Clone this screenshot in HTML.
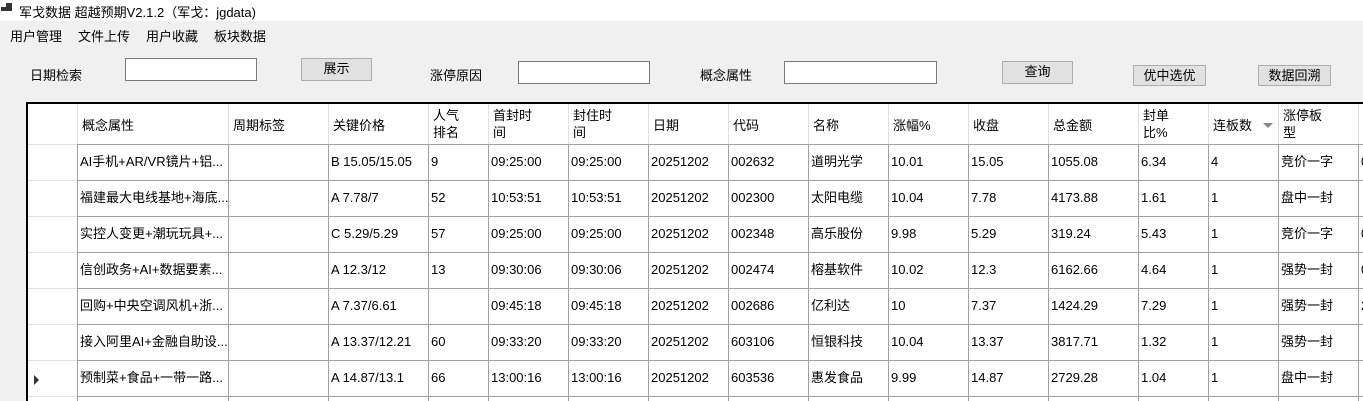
<!DOCTYPE html>
<html><head><meta charset="utf-8"><style>
*{margin:0;padding:0;box-sizing:border-box}
html,body{width:1363px;height:401px;overflow:hidden}
body{background:#f0f0f0;font-family:"Liberation Sans","Noto Sans CJK SC",sans-serif;font-size:13px;color:#000;position:relative}
.a{position:absolute;white-space:nowrap}
.tb{left:0;top:0;width:1363px;height:21px;background:#fff}
.btn{position:absolute;background:#e1e1e1;border:1px solid #adadad;text-align:center;font-size:13px;line-height:20px}
.inp{position:absolute;background:#fff;border:1px solid #7a7a7a;height:23px}
#grid{position:absolute;left:26px;top:102px;width:1337px;height:299px;background:#fff;border-top:2px solid #000;border-left:2px solid #000;overflow:hidden}
.vl{position:absolute;top:0;width:1px;height:300px;background:#a0a0a0}
.hl{position:absolute;left:0;height:1px;width:1340px;background:#a0a0a0}
.hd{position:absolute;top:0;font-size:13px;line-height:17px}
.c{position:absolute;font-size:13px;line-height:16px}
</style></head><body>
<div class="a tb"></div>
<div class="a" style="left:1px;top:7px;width:5px;height:4px;background:#333"></div>
<div class="a" style="left:6px;top:3px;width:6px;height:8px;background:#333"></div>
<div class="a" style="left:19px;top:2px;font-size:13px">军戈数据 超越预期V2.1.2（军戈：jgdata)</div>
<div class="a" style="left:10px;top:26px">用户管理</div>
<div class="a" style="left:78px;top:26px">文件上传</div>
<div class="a" style="left:146px;top:26px">用户收藏</div>
<div class="a" style="left:214px;top:26px">板块数据</div>
<div class="a" style="left:30px;top:65px">日期检索</div>
<div class="inp" style="left:125px;top:58px;width:132px"></div>
<div class="btn" style="left:301px;top:58px;width:71px;height:23px">展示</div>
<div class="a" style="left:430px;top:65px">涨停原因</div>
<div class="inp" style="left:518px;top:61px;width:132px"></div>
<div class="a" style="left:700px;top:65px">概念属性</div>
<div class="inp" style="left:784px;top:61px;width:153px"></div>
<div class="btn" style="left:1002px;top:61px;width:71px;height:23px">查询</div>
<div class="btn" style="left:1133px;top:65px;width:73px;height:21px">优中选优</div>
<div class="btn" style="left:1258px;top:65px;width:73px;height:21px">数据回溯</div>

<div id="grid"></div>
<script>
var g=document.getElementById('grid');
var cols=[26,77,228,328,428,488,568,648,728,808,888,968,1048,1138,1208,1278,1358];
var O=28;
var h='';
for(var i=1;i<cols.length;i++){var x=cols[i]-O;
h+='<div class="vl" style="left:'+x+'px;top:0;height:41px;background:#e0e0e0"></div>';
h+='<div class="vl" style="left:'+x+'px;top:41px"></div>';}
var ys=[144,180,216,252,288,324,360,396];
for(var j=0;j<ys.length;j++){var y=ys[j]-104;
h+='<div class="hl" style="top:'+y+'px;left:0;width:49px;background:#e0e0e0"></div>';
h+='<div class="hl" style="top:'+y+'px;left:49px"></div>';}
var hd=[['概念属性'],['周期标签'],['关键价格'],['人气','排名'],['首封时','间'],['封住时','间'],['日期'],['代码'],['名称'],['涨幅%'],['收盘'],['总金额'],['封单','比%'],['连板数'],['涨停板','型']];
for(var k=0;k<hd.length;k++){var x=cols[k+1]-O+5;
if(hd[k].length==1)h+='<div class="hd" style="left:'+x+'px;top:13px">'+hd[k][0]+'</div>';
else h+='<div class="hd" style="left:'+x+'px;top:3px">'+hd[k][0]+'<br>'+hd[k][1]+'</div>';}
h+='<div class="a" style="left:1235px;top:19px;width:0;height:0;border-left:5px solid transparent;border-right:5px solid transparent;border-top:5px solid #888"></div>';
var rows=[
['AI手机+AR/VR镜片+铝...','','B 15.05/15.05','9','09:25:00','09:25:00','20251202','002632','道明光学','10.01','15.05','1055.08','6.34','4','竞价一字','0'],
['福建最大电线基地+海底...','','A 7.78/7','52','10:53:51','10:53:51','20251202','002300','太阳电缆','10.04','7.78','4173.88','1.61','1','盘中一封',''],
['实控人变更+潮玩玩具+...','','C 5.29/5.29','57','09:25:00','09:25:00','20251202','002348','高乐股份','9.98','5.29','319.24','5.43','1','竞价一字','0'],
['信创政务+AI+数据要素...','','A 12.3/12','13','09:30:06','09:30:06','20251202','002474','榕基软件','10.02','12.3','6162.66','4.64','1','强势一封','0'],
['回购+中央空调风机+浙...','','A 7.37/6.61','','09:45:18','09:45:18','20251202','002686','亿利达','10','7.37','1424.29','7.29','1','强势一封','2'],
['接入阿里AI+金融自助设...','','A 13.37/12.21','60','09:33:20','09:33:20','20251202','603106','恒银科技','10.04','13.37','3817.71','1.32','1','强势一封',''],
['预制菜+食品+一带一路...','','A 14.87/13.1','66','13:00:16','13:00:16','20251202','603536','惠发食品','9.99','14.87','2729.28','1.04','1','盘中一封','']];
for(var r=0;r<rows.length;r++){var y=ys[r]-104+10;
for(var c=0;c<rows[r].length;c++){var x=cols[c+1]-O+3;
h+='<div class="c" style="left:'+x+'px;top:'+y+'px">'+rows[r][c]+'</div>';}}
h+='<div class="a" style="left:6px;top:271px;width:0;height:0;border-top:5px solid transparent;border-bottom:5px solid transparent;border-left:5px solid #333"></div>';
g.innerHTML=h;
</script>
</body></html>
